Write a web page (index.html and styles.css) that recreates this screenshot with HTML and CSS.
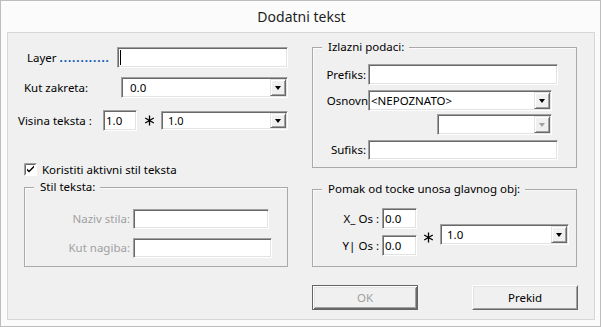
FILE: index.html
```html
<!DOCTYPE html>
<html>
<head>
<meta charset="utf-8">
<link rel="stylesheet" href="styles.css">
</head>
<body>
<div class="win">
  <div class="titlebar">Dodatni tekst</div>
  <div class="panel">
    <div class="cols">
      <div class="col-left">
        <div class="row r-layer">
          <span class="lbl lbl-layer">Layer <span class="dots">............</span></span>
          <div class="field w-layer"><span class="caret"></span></div>
        </div>
        <div class="row r-kut">
          <span class="lbl lbl-kut">Kut zakreta:</span>
          <div class="combo w-kut"><span class="ctext pad8">0.0</span><span class="cbtn"><i class="tri"></i></span></div>
        </div>
        <div class="row r-vis">
          <span class="lbl lbl-vis">Visina teksta :</span>
          <div class="field w-vis"><span class="ftext">1.0</span></div>
          <span class="star"><svg width="11" height="11" viewBox="0 0 11 11"><path d="M5.5 0.5V10.5M1.2 3L9.8 8M1.2 8L9.8 3" stroke="#000" stroke-width="1.3" fill="none"/></svg></span>
          <div class="combo w-vis2"><span class="ctext pad6 small">1.0</span><span class="cbtn"><i class="tri"></i></span></div>
        </div>
        <div class="check-row">
          <svg class="chk" width="13" height="13" viewBox="0 0 13 13">
            <rect x="0" y="0" width="13" height="13" fill="#fff"/>
            <path d="M0.5 12.5V0.5H12.5" stroke="#a0a0a0" fill="none"/>
            <path d="M1.5 11.5V1.5H11.5" stroke="#696969" fill="none"/>
            <path d="M3 5.5L5 7.5L10 2.5V4.5L5 9.5L3 7.5Z" fill="#000"/>
          </svg>
          <span class="chk-text">Koristiti aktivni stil teksta</span>
        </div>
        <div class="group g-stil">
          <div class="legend">Stil teksta:</div>
          <div class="grow first">
            <span class="glbl dis w-stil-lbl">Naziv stila:</span>
            <div class="field w-naziv"></div>
          </div>
          <div class="grow second">
            <span class="glbl dis w-stil-lbl">Kut nagiba:</span>
            <div class="field w-nagib"></div>
          </div>
        </div>
      </div>
      <div class="col-right">
        <div class="group g-izl">
          <div class="legend">Izlazni podaci:</div>
          <div class="grow r-pre">
            <span class="glbl w-izl-lbl">Prefiks:</span>
            <div class="field w-pre"></div>
          </div>
          <div class="grow r-osn">
            <span class="glbl w-izl-lbl clip">Osnovn</span>
            <div class="combo w-osn"><span class="ctext pad1">&lt;NEPOZNATO&gt;</span><span class="cbtn"><i class="tri"></i></span></div>
          </div>
          <div class="grow r-dis">
            <div class="combo w-dis"><span class="ctext"></span><span class="cbtn"><i class="tri gray"></i></span></div>
          </div>
          <div class="grow r-suf">
            <span class="glbl w-izl-lbl">Sufiks:</span>
            <div class="field w-suf"></div>
          </div>
        </div>
        <div class="group g-pom">
          <div class="legend">Pomak od tocke unosa glavnog obj:</div>
          <div class="pom-body">
            <div class="pom-inputs">
              <div class="grow">
                <span class="glbl w-pom-lbl">X_ Os :</span>
                <div class="field w-os"><span class="ftext">0.0</span></div>
              </div>
              <div class="grow r-y">
                <span class="glbl w-pom-lbl">Y| Os :</span>
                <div class="field w-os"><span class="ftext">0.0</span></div>
              </div>
            </div>
            <span class="star star2"><svg width="11" height="11" viewBox="0 0 11 11"><path d="M5.5 0.5V10.5M1.2 3L9.8 8M1.2 8L9.8 3" stroke="#000" stroke-width="1.3" fill="none"/></svg></span>
            <div class="combo w-pomc"><span class="ctext pad6">1.0</span><span class="cbtn"><i class="tri"></i></span></div>
          </div>
        </div>
      </div>
    </div>
    <div class="buttons">
      <div class="btn btn-ok">OK</div>
      <div class="btn btn-cancel">Prekid</div>
    </div>
  </div>
</div>
</body>
</html>
```

FILE: styles.css
```css
* { box-sizing: border-box; }
html, body { margin: 0; padding: 0; }
body {
  width: 601px;
  height: 327px;
  overflow: hidden;
  font-family: "Noto Sans", "Open Sans", sans-serif;
  font-size: 11.5px;
  color: #000;
  background: #fafafa;
}
.win {
  width: 601px;
  height: 327px;
  border: 1px solid #bdbdbd;
  background: #fbfbfb;
}
.titlebar {
  height: 31px;
  line-height: 31px;
  text-align: center;
  font-size: 14px;
  color: #1e1e1e;
  padding-left: 2px;
}
.panel {
  margin-left: 6px;
  width: 588px;
  height: 288px;
  border: 1px solid #d6d6d6;
  background: #f0f0f0;
}
.cols { display: flex; }
.col-left { width: 292px; }
.col-right { width: 294px; }

.row { display: flex; align-items: center; }
.lbl { line-height: 14px; white-space: nowrap; }

.r-layer { margin-top: 14px; height: 21px; }
.lbl-layer { width: 109px; padding-left: 19px; }
.dots { color: #0a58b0; font-weight: bold; letter-spacing: 0.95px; }
.w-layer { width: 171px; height: 21px; }

.r-kut { margin-top: 9px; height: 21px; }
.lbl-kut { width: 113px; padding-left: 16px; }
.w-kut { width: 167px; height: 21px; }

.r-vis { margin-top: 12px; height: 21px; }
.lbl-vis { width: 95px; padding-left: 10px; }
.w-vis { width: 34px; height: 21px; }
.star { width: 24px; display: flex; justify-content: center; align-items: center; }
.w-vis2 { width: 127px; height: 19px; }

.field {
  background: #fff;
  border: 1px solid;
  border-color: #a0a0a0 #ffffff #ffffff #a0a0a0;
  box-shadow: inset 1px 1px 0 #696969, inset -1px -1px 0 #e3e3e3;
  display: flex;
  align-items: center;
}
.ftext { padding-left: 2px; line-height: 14px; }
.caret { width: 1px; height: 15px; background: #000; margin-left: 2px; }

.combo {
  background: #fff;
  border: 1px solid;
  border-color: #a0a0a0 #ffffff #ffffff #a0a0a0;
  box-shadow: inset 1px 1px 0 #696969, inset -1px -1px 0 #e3e3e3;
  display: flex;
  align-items: stretch;
  padding: 1px;
}
.ctext { flex: 1; line-height: 14px; display: flex; align-items: center; white-space: nowrap; }
.pad8 { padding-left: 7px; }
.pad6 { padding-left: 5px; }
.pad1 { padding-left: 1px; }
.small { font-size: 11px; }
.cbtn {
  width: 16px;
  background: #f0f0f0;
  border: 1px solid;
  border-color: #e3e3e3 #696969 #696969 #e3e3e3;
  box-shadow: inset 1px 1px 0 #fff, inset -1px -1px 0 #a0a0a0;
  display: flex;
  align-items: center;
  justify-content: center;
}
.tri {
  width: 0;
  height: 0;
  border-left: 3.5px solid transparent;
  border-right: 3.5px solid transparent;
  border-top: 4px solid #000;
  margin-top: 1px;
}
.tri.gray { border-top-color: #a0a0a0; }

.check-row { margin-top: 32px; height: 13px; display: flex; align-items: center; padding-left: 16px; }
.chk { display: block; flex: none; }
.chk-text { margin-left: 5px; line-height: 14px; white-space: nowrap; }

.group {
  border: 1px solid #a9a9a9;
  box-shadow: inset 1px 1px 0 #fbfbfb;
}
.legend {
  margin-top: -8px;
  margin-left: 9px;
  padding: 0 5px 0 6px;
  background: #f0f0f0;
  width: fit-content;
  line-height: 14px;
  height: 14px;
  white-space: nowrap;
}
.g-stil { margin-top: 11px; margin-left: 16px; width: 264px; height: 80px; }
.grow { display: flex; align-items: center; }
.glbl { line-height: 14px; white-space: nowrap; text-align: right; }
.dis { color: #a0a0a0; }
.w-stil-lbl { width: 108px; padding-right: 3px; }
.g-stil .first { margin-top: 15px; }
.g-stil .second { margin-top: 9px; }
.w-naziv { width: 136px; height: 20px; }
.w-nagib { width: 139px; height: 20px; }

.g-izl { margin-top: 14px; margin-left: 12px; width: 265px; height: 121px; }
.w-izl-lbl { width: 55px; padding-right: 2px; }
.clip { overflow: hidden; padding-right: 0; }
.r-pre { margin-top: 10px; }
.w-pre { width: 190px; height: 21px; }
.r-osn { margin-top: 5px; }
.w-osn { width: 184px; height: 21px; }
.r-dis { margin-top: 3px; padding-left: 124px; }
.w-dis { width: 115px; height: 21px; }
.r-suf { margin-top: 5px; }
.w-suf { width: 190px; height: 20px; }

.g-pom { margin-top: 21px; margin-left: 12px; width: 265px; height: 78px; }
.pom-body { display: flex; align-items: flex-start; margin-top: 12px; }
.w-pom-lbl { width: 69px; padding-right: 3px; }
.w-os { width: 35px; height: 21px; }
.r-y { margin-top: 6px; }
.star2 { width: 23px; margin-top: 24px; }
.w-pomc { width: 129px; height: 21px; margin-top: 16px; }

.buttons { display: flex; margin-top: 18px; padding-left: 304px; gap: 54px; }
.btn {
  width: 106px;
  height: 25px;
  display: flex;
  align-items: center;
  justify-content: center;
  line-height: 14px;
  background: #f0f0f0;
}
.btn-ok {
  color: #a0a0a0;
  border: 1px solid #646464;
  box-shadow: inset 1px 1px 0 #fff, inset -1px -1px 0 #696969, inset 2px 2px 0 #e3e3e3, inset -2px -2px 0 #a0a0a0;
}
.btn-cancel {
  border: 1px solid;
  border-color: #fff #696969 #696969 #fff;
  box-shadow: inset 1px 1px 0 #e3e3e3, inset -1px -1px 0 #a0a0a0;
}
```
